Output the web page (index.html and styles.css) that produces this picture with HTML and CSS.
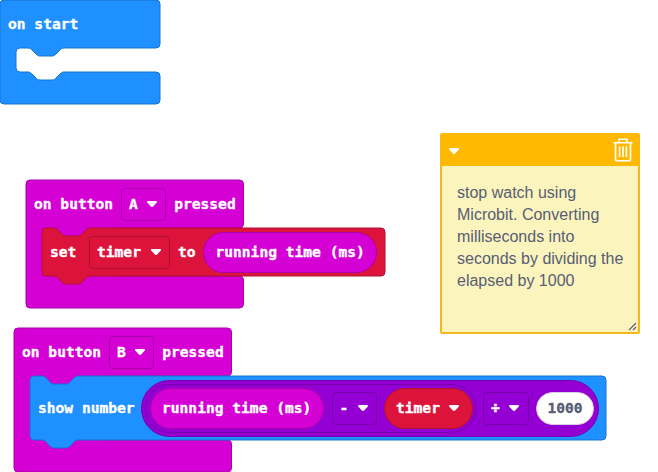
FILE: index.html
```
<!DOCTYPE html>
<html lang="en">
<head>
<meta charset="utf-8">
<title>Stop watch</title>
<link rel="stylesheet" href="styles.css">
</head>
<body>
<svg class="defs" width="0" height="0" aria-hidden="true">
  <symbol id="caret" viewBox="0 0 12 8"><path d="M2.2 1H9.8Q11.8 1 10.8 2.5L7.4 6.3Q6 7.7 4.6 6.3L1.2 2.5Q.2 1 2.2 1Z" fill="#fff"/></symbol>
</svg>
<main class="workspace">
  <section class="event start">
    <svg class="shape basic" width="160" height="104"><path d="M4,0H156a4,4 0 0 1 4,4V44a4,4 0 0 1 -4,4H64c-2,0 -3,1 -4,2l-4,4c-1,1 -2,2 -4,2h-12c-2,0 -3,-1 -4,-2l-4,-4c-1,-1 -2,-2 -4,-2H20a4,4 0 0 0 -4,4V68a4,4 0 0 0 4,4H28c2,0 3,1 4,2l4,4c1,1 2,2 4,2h12c2,0 3,-1 4,-2l4,-4c1,-1 2,-2 4,-2H156a4,4 0 0 1 4,4V100a4,4 0 0 1 -4,4H4a4,4 0 0 1 -4,-4V4a4,4 0 0 1 4,-4Z"/></svg>
    <div class="row head"><span>on start</span></div>
  </section>

  <section class="event button-a">
    <svg class="shape input" width="218" height="128"><path d="M4,0H213.5a4,4 0 0 1 4,4V44a4,4 0 0 1 -4,4H90V96H213.5a4,4 0 0 1 4,4V124a4,4 0 0 1 -4,4H4a4,4 0 0 1 -4,-4V4a4,4 0 0 1 4,-4Z"/></svg>
    <div class="row head"><span>on button</span><span class="field letter input">A<svg class="caret"><use href="#caret"/></svg></span><span>pressed</span></div>
    <div class="statement set">
      <svg class="shape variable" width="343" height="56"><path d="M0,4a4,4 0 0 1 4,-4H12c2,0 3,1 4,2l4,4c1,1 2,2 4,2h12c2,0 3,-1 4,-2l4,-4c1,-1 2,-2 4,-2H339a4,4 0 0 1 4,4V44a4,4 0 0 1 -4,4H48c-2,0 -3,1 -4,2l-4,4c-1,1 -2,2 -4,2h-12c-2,0 -3,-1 -4,-2l-4,-4c-1,-1 -2,-2 -4,-2H4a4,4 0 0 1 -4,-4Z"/></svg>
      <div class="row"><span class="set-label">set</span><span class="field name variable">timer<svg class="caret"><use href="#caret"/></svg></span><span>to</span><span class="pill running input">running time (ms)</span></div>
    </div>
  </section>

  <section class="event button-b">
    <svg class="shape input" width="218" height="144"><path d="M4,0H213.5a4,4 0 0 1 4,4V44a4,4 0 0 1 -4,4H90V112H213.5a4,4 0 0 1 4,4V140a4,4 0 0 1 -4,4H4a4,4 0 0 1 -4,-4V4a4,4 0 0 1 4,-4Z"/></svg>
    <div class="row head"><span>on button</span><span class="field letter input">B<svg class="caret"><use href="#caret"/></svg></span><span>pressed</span></div>
    <div class="statement show">
      <svg class="shape basic" width="576" height="72"><path d="M0,4a4,4 0 0 1 4,-4H12c2,0 3,1 4,2l4,4c1,1 2,2 4,2h12c2,0 3,-1 4,-2l4,-4c1,-1 2,-2 4,-2H572a4,4 0 0 1 4,4V60a4,4 0 0 1 -4,4H48c-2,0 -3,1 -4,2l-4,4c-1,1 -2,2 -4,2h-12c-2,0 -3,-1 -4,-2l-4,-4c-1,-1 -2,-2 -4,-2H4a4,4 0 0 1 -4,-4Z"/></svg>
      <div class="row"><span class="show-label">show number</span>
        <div class="pill outer math">
          <div class="pill inner math"><span class="pill running input">running time (ms)</span><span class="field letter math">-<svg class="caret"><use href="#caret"/></svg></span><span class="pill var variable">timer<svg class="caret"><use href="#caret"/></svg></span></div>
          <span class="field letter math">÷<svg class="caret"><use href="#caret"/></svg></span>
          <span class="number">1000</span>
        </div>
      </div>
    </div>
  </section>

  <aside class="comment">
    <header class="comment-bar">
      <svg class="caret"><use href="#caret"/></svg>
      <svg class="trash" width="20" height="24" viewBox="0 0 20 24" fill="none" stroke="#fff" stroke-width="1.6"><path d="M.5 4.8H19.5M6 4.5V1.3H14V4.5M2.5 5V21Q2.5 22.8 4.3 22.8H15.7Q17.5 22.8 17.5 21V5M6.6 8.2V19M10 8.2V19M13.4 8.2V19"/></svg>
    </header>
    <p class="comment-text">stop watch using<br>Microbit. Converting<br>milliseconds into<br>seconds by dividing the<br>elapsed by 1000</p>
    <svg class="grip" width="9" height="9" viewBox="0 0 9 9" stroke="#575e75" stroke-width="1.1"><path d="M1 8L8 1M5 8L8 5"/></svg>
  </aside>
</main>
</body>
</html>
```
FILE: styles.css
```
* { box-sizing: border-box; }
body { margin: 0; background: #fff; overflow: hidden; }
.defs { position: absolute; }
.workspace {
  position: relative;
  width: 658px;
  height: 472px;
  overflow: hidden;
  color: #fff;
  font: bold 14.6px/20px "DejaVu Sans Mono", monospace;
  -webkit-text-stroke: 0.35px currentColor;
  white-space: nowrap;
}

.basic { --fill: #1e90ff; --edge: #1873cc; }
.input { --fill: #d400d4; --edge: #aa00aa; }
.variable { --fill: #dc143c; --edge: #b01030; }
.math { --fill: #9400d3; --edge: #7600a9; }

/* Blocks placed on the free canvas */
.event { position: absolute; }
.start { left: 0; top: 0; width: 160px; height: 104px; }
.button-a { left: 26px; top: 180px; }
.button-b { left: 14px; top: 328px; }

.shape { position: absolute; left: 0; top: 0; overflow: visible; }
.shape path { fill: var(--fill); stroke: var(--edge); stroke-width: 1; }

.row { position: relative; display: flex; align-items: center; height: 100%; padding-left: 8px; }
.row.head { height: 48px; gap: 7.8px; }
.statement { position: relative; margin-left: 16px; }
.set { width: 343px; height: 48px; }
.show { width: 576px; height: 64px; }

.field {
  display: flex;
  align-items: center;
  flex: none;
  justify-content: space-between;
  height: 33px;
  padding: 0 7.5px 0 7px;
  border: 1px solid var(--edge);
  border-radius: 4px;
}
.field.letter { width: 45.5px; }
.field.name { width: 81px; margin-right: 8px; }
.set-label { width: 39px; }
.caret { display: block; width: 12px; height: 8px; flex: none; }

.pill {
  display: flex;
  align-items: center;
  flex: none;
  height: 41px;
  border: 1px solid var(--edge);
  border-radius: 30px;
  background: var(--fill);
}
.running { width: 174px; padding-left: 11px; }
.set .running { margin-left: 7.9px; }
.show-label { width: 103px; }
.outer { width: 458px; height: 57px; padding-left: 3px; }
.inner { width: 331px; height: 49px; padding-left: 4px; margin-right: 7px; }
.inner .field { margin: 0 7px 0 7.5px; }
.var { width: 89px; padding: 0 12px 0 11px; justify-content: space-between; }
.number {
  width: 58px;
  height: 33px;
  margin-left: 7.5px;
  border: 1px solid #dcd0e4;
  border-radius: 17px;
  background: #fff;
  color: #575e75;
  line-height: 30px;
  text-align: center;
}

.comment {
  position: absolute;
  left: 439.5px;
  top: 133px;
  width: 200.5px;
  height: 201px;
  border: 2px solid #f5b81c;
  border-radius: 2px;
  background: #fbf4bd;
}
.comment-bar {
  display: flex;
  align-items: center;
  justify-content: space-between;
  height: 33px;
  margin: -2px -1px 0;
  padding: 0 6px 0 7px;
  background: #ffb900;
}
.comment-bar .caret { margin-top: 3px; }
.comment-text {
  margin: 16px 0 0 15.5px;
  color: #575e75;
  font: 16px/22px "Liberation Sans", Arial, sans-serif;
  -webkit-text-stroke: 0;
}
.grip { position: absolute; right: 1px; bottom: 1px; }
```
